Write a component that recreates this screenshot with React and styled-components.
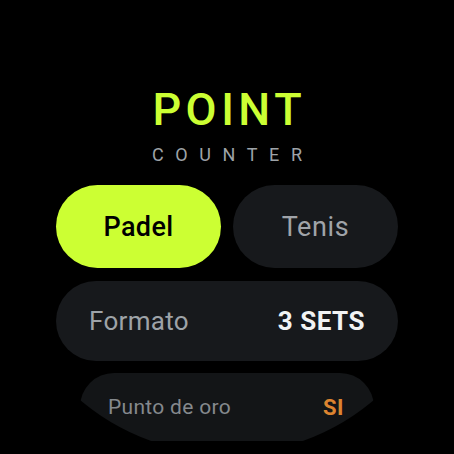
import React from "react";
import styled, { createGlobalStyle } from "styled-components";

const GlobalStyle = createGlobalStyle`
  html, body {
    margin: 0;
    padding: 0;
    background: #000;
  }
  body {
    font-family: Roboto, "Noto Sans", Arial, sans-serif;
  }
`;

const Screen = styled.div`
  width: 454px;
  height: 454px;
  background: #000;
  overflow: hidden;
  clip-path: circle(227px at 227px 227px);
  display: flex;
  flex-direction: column;
  align-items: center;
  padding-top: 87px;
  box-sizing: border-box;
`;

const Title = styled.h1`
  margin: 0;
  font-family: Roboto, sans-serif;
  font-weight: 500;
  font-size: 45px;
  line-height: 45px;
  letter-spacing: 4.5px;
  padding-left: 4.5px;
  color: #ccff33;
`;

const Subtitle = styled.div`
  margin-top: 14px;
  font-family: Roboto, sans-serif;
  font-weight: 400;
  font-size: 18px;
  line-height: 18px;
  letter-spacing: 11.6px;
  padding-left: 11.6px;
  color: #9ea3a8;
`;

const SportRow = styled.div`
  margin-top: 21px;
  width: 342px;
  display: grid;
  grid-template-columns: 1fr 1fr;
  gap: 12px;
`;

const SportButton = styled.button`
  height: 83px;
  border: none;
  border-radius: 42px;
  padding: 0;
  display: flex;
  align-items: center;
  justify-content: center;
  font-family: Roboto, sans-serif;
  font-size: 27px;
  letter-spacing: ${(p) => (p.$active ? "0.4px" : "0.6px")};
  font-weight: ${(p) => (p.$active ? 500 : 400)};
  background: ${(p) => (p.$active ? "#ccff33" : "#17191c")};
  color: ${(p) => (p.$active ? "#000" : "#a0a4a9")};
`;

const SettingCard = styled.div`
  margin-top: ${(p) => p.$mt}px;
  width: ${(p) => p.$w}px;
  height: ${(p) => p.$h}px;
  border-radius: ${(p) => p.$h / 2}px;
  background: ${(p) => p.$bg};
  box-sizing: border-box;
  padding: 0 ${(p) => p.$pr}px 0 ${(p) => p.$pl}px;
  display: flex;
  align-items: center;
  justify-content: space-between;
  flex-shrink: 0;
`;

const Label = styled.span`
  font-family: Roboto, sans-serif;
  font-weight: 400;
  font-size: ${(p) => p.$size}px;
  letter-spacing: 0.3px;
  color: ${(p) => p.$color};
`;

const Value = styled.span`
  font-family: Roboto, sans-serif;
  font-weight: 700;
  font-size: ${(p) => p.$size}px;
  letter-spacing: 0.5px;
  color: ${(p) => p.$color};
`;

export default function App() {
  return (
    <>
      <GlobalStyle />
      <Screen>
        <Title>POINT</Title>
        <Subtitle>COUNTER</Subtitle>
        <SportRow>
          <SportButton $active>Padel</SportButton>
          <SportButton>Tenis</SportButton>
        </SportRow>
        <SettingCard $mt={13} $w={342} $h={80} $bg="#17191c" $pl={33} $pr={33}>
          <Label $size={26} $color="#9ea3a8">Formato</Label>
          <Value $size={26} $color="#f1f3f4">3 SETS</Value>
        </SettingCard>
        <SettingCard $mt={12} $w={294} $h={68} $bg="#131517" $pl={28} $pr={30}>
          <Label $size={21} $color="#85898d">Punto de oro</Label>
          <Value $size={22} $color="#dc8430">SI</Value>
        </SettingCard>
      </Screen>
    </>
  );
}
